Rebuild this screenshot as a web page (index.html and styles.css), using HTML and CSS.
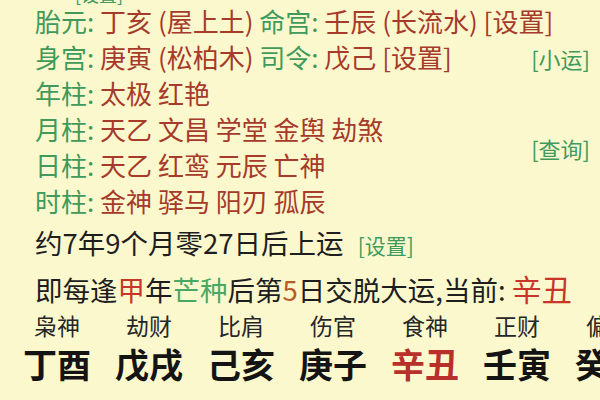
FILE: index.html
```html
<!DOCTYPE html>
<html lang="zh-CN">
<head>
  <meta charset="UTF-8">
  <title>排盘</title>
  <link rel="stylesheet" href="styles.css">
</head>
<body>
  <div class="panel">
    <div class="info">
      <div class="lines">
        <div class="line cut"><span class="link">[设置]</span></div>
        <div class="line"><span class="key">胎元:</span> <span class="val">丁亥 (屋上土)</span> <span class="key">命宫:</span> <span class="val">壬辰 (长流水)</span> <span class="val">[设置]</span></div>
        <div class="line"><span class="key">身宫:</span> <span class="val">庚寅 (松柏木)</span> <span class="key">司令:</span> <span class="val">戊己</span> <span class="val">[设置]</span></div>
        <div class="line"><span class="key">年柱:</span> <span class="val">太极 红艳</span></div>
        <div class="line"><span class="key">月柱:</span> <span class="val">天乙 文昌 学堂 金舆 劫煞</span></div>
        <div class="line"><span class="key">日柱:</span> <span class="val">天乙 红鸾 元辰 亡神</span></div>
        <div class="line"><span class="key">时柱:</span> <span class="val">金神 驿马 阳刃 孤辰</span></div>
      </div>
      <div class="side">
        <span class="link side-xy">[小运]</span>
        <span class="link side-cx">[查询]</span>
      </div>
    </div>

    <div class="line start">约7年9个月零27日后上运 <span class="link small">[设置]</span></div>
    <div class="line dayun">即每逢<span class="red">甲</span>年<span class="green">芒种</span>后第<span class="num">5</span>日交脱大运,当前: <span class="red big">辛丑</span></div>

    <div class="pillars">
      <div class="col"><div class="god">枭神</div><div class="gz">丁酉</div></div>
      <div class="col"><div class="god">劫财</div><div class="gz">戊戌</div></div>
      <div class="col"><div class="god">比肩</div><div class="gz">己亥</div></div>
      <div class="col"><div class="god">伤官</div><div class="gz">庚子</div></div>
      <div class="col"><div class="god">食神</div><div class="gz now">辛丑</div></div>
      <div class="col"><div class="god">正财</div><div class="gz">壬寅</div></div>
      <div class="col"><div class="god">偏印</div><div class="gz">癸卯</div></div>
    </div>
  </div>
</body>
</html>
```

FILE: styles.css
```css
html, body {
  margin: 0;
  height: 100%;
}
body {
  background: #fcf8cd;
  font-family: "Noto Sans CJK SC", "Noto Sans", sans-serif;
  color: #1e1e1e;
  overflow: hidden;
}
.panel {
  width: 600px;
  height: 400px;
  overflow: hidden;
  white-space: nowrap;
}
.info {
  display: grid;
  grid-template-columns: minmax(0, 1fr) auto;
  padding-left: 35px;
  padding-right: 10px;
}
.lines {
  min-width: 0;
}
.line {
  font-size: 26px;
  line-height: 36px;
}
.line.cut {
  font-size: 18px;
  line-height: 18px;
  height: 18px;
  margin-top: -15px;
  padding-left: 40px;
}
.key {
  color: #3f9a5c;
}
.val {
  color: #a63a2b;
}
.link {
  color: #3f9a5c;
}
.side {
  display: flex;
  flex-direction: column;
  align-items: flex-end;
  font-size: 22px;
  line-height: 36px;
  padding-top: 40px;
}
.side-cx {
  margin-top: 54px;
}
.start {
  padding-left: 35px;
  margin-top: 4px;
  font-size: 27.5px;
  line-height: 38px;
}
.small {
  font-size: 21px;
  margin-left: 8px;
}
.dayun {
  padding-left: 35px;
  margin-top: 5px;
  font-size: 27.5px;
  line-height: 38px;
}
.red {
  color: #c8352a;
}
.green {
  color: #49a864;
}
.num {
  color: #b85a2a;
}
.big {
  font-size: 30px;
}
.pillars {
  display: flex;
  padding-left: 11px;
  margin-top: 2px;
}
.col {
  width: 92px;
  flex: none;
  text-align: center;
}
.god {
  font-size: 23px;
  line-height: 30px;
  color: #262626;
}
.gz {
  font-size: 34px;
  font-weight: 700;
  line-height: 44px;
  margin-top: 2px;
  color: #141414;
}
.gz.now {
  color: #b8302a;
}
```
